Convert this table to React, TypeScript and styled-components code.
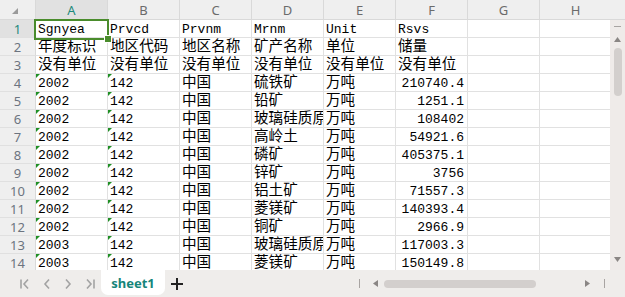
import React from "react";
import styled, { createGlobalStyle, css } from "styled-components";

const GlobalStyle = createGlobalStyle`
  html, body { margin: 0; padding: 0; background: #fff; overflow: hidden; }
  * { box-sizing: border-box; }
`;

const COLS = ["A", "B", "C", "D", "E", "F", "G", "H"];

type Cell = { v: string; cjk?: boolean; num?: boolean; flag?: boolean };

const head: string[][] = [
  ["Sgnyea", "Prvcd", "Prvnm", "Mrnm", "Unit", "Rsvs"],
  ["年度标识", "地区代码", "地区名称", "矿产名称", "单位", "储量"],
  ["没有单位", "没有单位", "没有单位", "没有单位", "没有单位", "没有单位"],
];

const data: [string, string, string, string][] = [
  ["2002", "硫铁矿", "210740.4", ""],
  ["2002", "铅矿", "1251.1", ""],
  ["2002", "玻璃硅质原料", "108402", ""],
  ["2002", "高岭土", "54921.6", ""],
  ["2002", "磷矿", "405375.1", ""],
  ["2002", "锌矿", "3756", ""],
  ["2002", "铝土矿", "71557.3", ""],
  ["2002", "菱镁矿", "140393.4", ""],
  ["2002", "铜矿", "2966.9", ""],
  ["2003", "玻璃硅质原料", "117003.3", ""],
  ["2003", "菱镁矿", "150149.8", ""],
];

const rows: Cell[][] = [
  ...head.map((r, i) =>
    r.map((v) => ({ v, cjk: i > 0 }) as Cell)
  ),
  ...data.map(([y, m, r]) => [
    { v: y, flag: true },
    { v: "142", flag: true },
    { v: "中国", cjk: true },
    { v: m, cjk: true },
    { v: "万吨", cjk: true },
    { v: r, num: true },
  ]),
];

const Page = styled.div`
  width: 625px;
  height: 297px;
  display: flex;
  flex-direction: column;
  overflow: hidden;
  font-family: "Liberation Mono", "Noto Sans CJK SC", monospace;
`;

const Main = styled.div`
  display: flex;
  height: 270px;
`;

const GridWrap = styled.div`
  position: relative;
  width: 610px;
  height: 270px;
  overflow: hidden;
`;

const Grid = styled.div`
  display: grid;
  grid-template-columns: 36px repeat(8, 72px);
  grid-template-rows: 20px repeat(14, 18px);
  width: 612px;
`;

const Corner = styled.div`
  position: relative;
  background: #efefef;
  border-right: 1px solid #d9d9d9;
  border-bottom: 1px solid #d9d9d9;
  &::after {
    content: "";
    position: absolute;
    right: 17px;
    bottom: 5px;
    width: 0;
    height: 0;
    border-left: 6px solid transparent;
    border-bottom: 6px solid #9a9a9a;
  }
`;

const ColHead = styled.div<{ $active?: boolean }>`
  display: flex;
  align-items: center;
  justify-content: center;
  font-family: "Noto Sans", "Liberation Sans", sans-serif;
  font-size: 13px;
  color: #6b6b6b;
  background: #efefef;
  border-right: 1px solid #d9d9d9;
  border-bottom: 1px solid #d9d9d9;
  ${(p) =>
    p.$active &&
    css`
      background: #e1e1e1;
      color: #1d8a7c;
      border-bottom: 1px solid #c8c8c8;
    `}
`;

const RowHead = styled.div<{ $active?: boolean }>`
  display: flex;
  align-items: center;
  justify-content: center;
  font-family: "Noto Sans", "Liberation Sans", sans-serif;
  font-size: 13px;
  color: #6c7480;
  background: #efefef;
  border-right: 1px solid #d9d9d9;
  border-bottom: 1px solid #e0e0e0;
  ${(p) =>
    p.$active &&
    css`
      background: #e1e1e1;
      color: #1d8a7c;
    `}
`;

const DataCell = styled.div<{ $num?: boolean; $flag?: boolean; $cjk?: boolean }>`
  position: relative;
  overflow: hidden;
  white-space: nowrap;
  border-right: 1px solid #e1e1e1;
  border-bottom: 1px solid #e1e1e1;
  padding: 0 3px 0 2px;
  color: #000;
  font-size: ${(p) => (p.$cjk ? "14.6px" : "13px")};
  line-height: 19px;
  text-align: ${(p) => (p.$num ? "right" : "left")};
  ${(p) =>
    p.$flag &&
    css`
      &::before {
        content: "";
        position: absolute;
        left: 0;
        top: 0;
        width: 0;
        height: 0;
        border-top: 4px solid #1f8f24;
        border-right: 4px solid transparent;
      }
    `}
`;

const Selection = styled.div`
  position: absolute;
  left: 34px;
  top: 19px;
  width: 75px;
  height: 21px;
  border: 2px solid #4a8c2c;
  pointer-events: none;
  &::after {
    content: "";
    position: absolute;
    right: -5px;
    bottom: -5px;
    width: 6px;
    height: 6px;
    background: #4a8c2c;
    border: 1px solid #fff;
  }
`;

const VBarCol = styled.div`
  width: 15px;
  display: flex;
  flex-direction: column;
`;

const VBarHead = styled.div`
  height: 20px;
  background: #efefef;
  border-bottom: 1px solid #d9d9d9;
`;

const VBar = styled.div`
  flex: 1;
  background: #efebe9;
  display: flex;
  flex-direction: column;
  align-items: center;
  padding-top: 6px;
`;

const Dash = styled.div`
  width: 7px;
  height: 1px;
  background: #a8a4a2;
  margin-bottom: 10px;
`;

const VThumb = styled.div`
  width: 8px;
  height: 48px;
  border-radius: 4px;
  background: #d3cfcd;
  margin-top: 6px;
`;

const Spacer = styled.div`
  flex: 1;
`;

const Bottom = styled.div`
  height: 27px;
  background: #efedeb;
  display: flex;
  align-items: stretch;
`;

const Nav = styled.div`
  display: flex;
  align-items: center;
  gap: 0;
  width: 101px;
  padding-left: 14px;
`;

const NavBtn = styled.div`
  width: 22px;
  display: flex;
  align-items: center;
  justify-content: center;
`;

const Tab = styled.div`
  width: 64px;
  height: 25px;
  background: #fff;
  border-radius: 0 0 7px 7px;
  display: flex;
  align-items: center;
  justify-content: center;
  font-family: "Noto Sans", "Liberation Sans", sans-serif;
  font-weight: 700;
  font-size: 13px;
  color: #16857a;
`;

const Plus = styled.div`
  width: 24px;
  display: flex;
  align-items: center;
  justify-content: center;
`;

const HScroll = styled.div`
  margin-left: auto;
  width: 268px;
  display: flex;
  align-items: center;
  padding-left: 2px;
`;

const HThumb = styled.div`
  width: 152px;
  height: 8px;
  border-radius: 4px;
  background: #d3cfcd;
  margin-left: 6px;
`;

const Bar = styled.div`
  width: 1px;
  height: 9px;
  background: #a8a4a2;
`;

const Tri = ({ dir }: { dir: "up" | "down" | "left" | "right" }) => {
  const pts = {
    up: "0,5 3.5,0 7,5",
    down: "0,0 7,0 3.5,5",
    left: "5,0 5,7 0,3.5",
    right: "0,0 5,3.5 0,7",
  }[dir];
  const vertical = dir === "up" || dir === "down";
  return (
    <svg width={vertical ? 7 : 5} height={vertical ? 5 : 7} viewBox={vertical ? "0 0 7 5" : "0 0 5 7"}>
      <polygon points={pts} fill="#8a8684" />
    </svg>
  );
};

const NavIcon = ({ kind }: { kind: "first" | "prev" | "next" | "last" }) => {
  const c = "#a3a3a3";
  return (
    <svg width="12" height="12" viewBox="0 0 12 12" fill="none" stroke={c} strokeWidth="1.6">
      {kind === "first" && (
        <>
          <line x1="2" y1="1.5" x2="2" y2="10.5" />
          <polyline points="9,1.5 5,6 9,10.5" />
        </>
      )}
      {kind === "prev" && <polyline points="8,1.5 4,6 8,10.5" />}
      {kind === "next" && <polyline points="4,1.5 8,6 4,10.5" />}
      {kind === "last" && (
        <>
          <polyline points="3,1.5 7,6 3,10.5" />
          <line x1="10" y1="1.5" x2="10" y2="10.5" />
        </>
      )}
    </svg>
  );
};

export default function App() {
  return (
    <>
      <GlobalStyle />
      <Page>
        <Main>
          <GridWrap>
            <Grid>
              <Corner />
              {COLS.map((c, i) => (
                <ColHead key={c} $active={i === 0}>
                  {c}
                </ColHead>
              ))}
              {rows.map((r, ri) => (
                <React.Fragment key={ri}>
                  <RowHead $active={ri === 0}>{ri + 1}</RowHead>
                  {COLS.map((_, ci) => {
                    const cell = r[ci];
                    return (
                      <DataCell
                        key={ci}
                        $num={cell?.num}
                        $flag={cell?.flag}
                        $cjk={cell?.cjk}
                      >
                        {cell?.v ?? ""}
                      </DataCell>
                    );
                  })}
                </React.Fragment>
              ))}
            </Grid>
            <Selection />
          </GridWrap>
          <VBarCol>
            <VBarHead />
            <VBar>
              <Dash />
              <Tri dir="up" />
              <VThumb />
              <Spacer />
              <Tri dir="down" />
              <div style={{ height: 8 }} />
            </VBar>
          </VBarCol>
        </Main>
        <Bottom>
          <Nav>
            <NavBtn><NavIcon kind="first" /></NavBtn>
            <NavBtn><NavIcon kind="prev" /></NavBtn>
            <NavBtn><NavIcon kind="next" /></NavBtn>
            <NavBtn><NavIcon kind="last" /></NavBtn>
          </Nav>
          <Tab>sheet1</Tab>
          <Plus>
            <svg width="12" height="12" viewBox="0 0 12 12">
              <rect x="0" y="5" width="12" height="2" fill="#222" />
              <rect x="5" y="0" width="2" height="12" fill="#222" />
            </svg>
          </Plus>
          <HScroll>
            <Bar />
            <div style={{ width: 13 }} />
            <Tri dir="left" />
            <HThumb />
            <Spacer />
            <Tri dir="right" />
            <div style={{ width: 14 }} />
            <Bar />
            <div style={{ width: 20 }} />
          </HScroll>
        </Bottom>
      </Page>
    </>
  );
}
